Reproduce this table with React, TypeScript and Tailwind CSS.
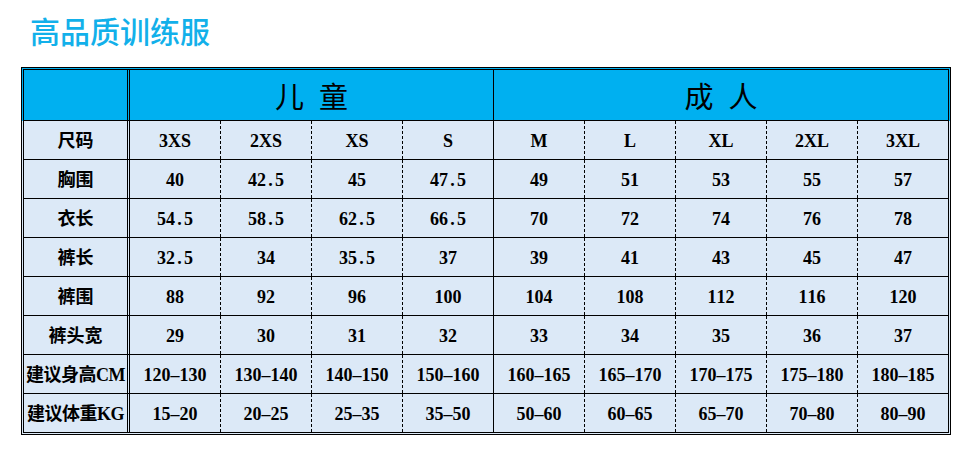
const kidSizes = ["3XS", "2XS", "XS", "S"];
const adultSizes = ["M", "L", "XL", "2XL", "3XL"];

const rows: { label: string; values: string[] }[] = [
  { label: "尺码", values: [...kidSizes, ...adultSizes] },
  { label: "胸围", values: ["40", "42.5", "45", "47.5", "49", "51", "53", "55", "57"] },
  { label: "衣长", values: ["54.5", "58.5", "62.5", "66.5", "70", "72", "74", "76", "78"] },
  { label: "裤长", values: ["32.5", "34", "35.5", "37", "39", "41", "43", "45", "47"] },
  { label: "裤围", values: ["88", "92", "96", "100", "104", "108", "112", "116", "120"] },
  { label: "裤头宽", values: ["29", "30", "31", "32", "33", "34", "35", "36", "37"] },
  {
    label: "建议身高CM",
    values: ["120-130", "130-140", "140-150", "150-160", "160-165", "165-170", "170-175", "175-180", "180-185"],
  },
  {
    label: "建议体重KG",
    values: ["15-20", "20-25", "25-35", "35-50", "50-60", "60-65", "65-70", "70-80", "80-90"],
  },
];

const cellFont = "font-['Liberation_Serif','Noto_Sans_CJK_SC',serif]";

// digits and punctuation take a fixed 9px cell, like the sheet's half-width song font
function HalfWidth({ text }: { text: string }) {
  return (
    <span className="whitespace-nowrap">
      {text.split("").map((ch, i) =>
        /[0-9.\-]/.test(ch) ? (
          <span key={i} className="inline-block w-[9px] text-center">
            {ch === "-" ? "–" : ch}
          </span>
        ) : (
          <span key={i}>{ch}</span>
        )
      )}
    </span>
  );
}

export default function App() {
  return (
    <div className="w-[971px] h-[458px] bg-white">
      <div className="h-[67px] pl-[30px] pt-[15px]">
        <h1 className="text-[30px] leading-none font-medium text-[#12b0ea] font-['Noto_Sans_CJK_SC',sans-serif]">
          高品质训练服
        </h1>
      </div>

      <div className="ml-[21px] w-[930px] border border-black p-px bg-[linear-gradient(to_bottom,#00b0f0_0,#00b0f0_53px,#dce9f7_53px)]">
        <div className="border border-black text-black">
          {/* header */}
          <div className="flex h-[51px] border-b border-black bg-[#00b0f0]">
            <div className="w-[106px] border-r-[3px] border-double border-black" />
            <div className="w-[364px] border-r border-black flex items-center justify-center gap-[15px] text-[29px] font-['Noto_Sans_CJK_SC',sans-serif] pt-[2px]">
              <span>儿</span>
              <span>童</span>
            </div>
            <div className="w-[454px] flex items-center justify-center gap-[15px] text-[29px] font-['Noto_Sans_CJK_SC',sans-serif] pt-[2px]">
              <span>成</span>
              <span>人</span>
            </div>
          </div>

          {rows.map((row, ri) => (
            <div
              key={row.label}
              className={`flex bg-[#dce9f7] ${ri < rows.length - 1 ? "h-[39px] border-b border-black" : "h-[38px]"}`}
            >
              <div
                className={`w-[106px] border-r-[3px] border-double border-black flex items-center justify-center pt-[2px] text-[18px] font-bold ${cellFont} ${
                  row.label.length > 4 ? "tracking-[-0.5px]" : ""
                }`}
              >
                <HalfWidth text={row.label} />
              </div>
              {row.values.map((v, i) => (
                <div
                  key={i}
                  className={`flex items-center justify-center pt-[2px] text-[18px] font-bold ${cellFont} ${
                    i === 8
                      ? "w-[90px]"
                      : i === 3
                        ? "w-[91px] border-r border-black"
                        : "w-[91px] border-r border-dashed border-black"
                  }`}
                >
                  <HalfWidth text={v} />
                </div>
              ))}
            </div>
          ))}
        </div>
      </div>
    </div>
  );
}
